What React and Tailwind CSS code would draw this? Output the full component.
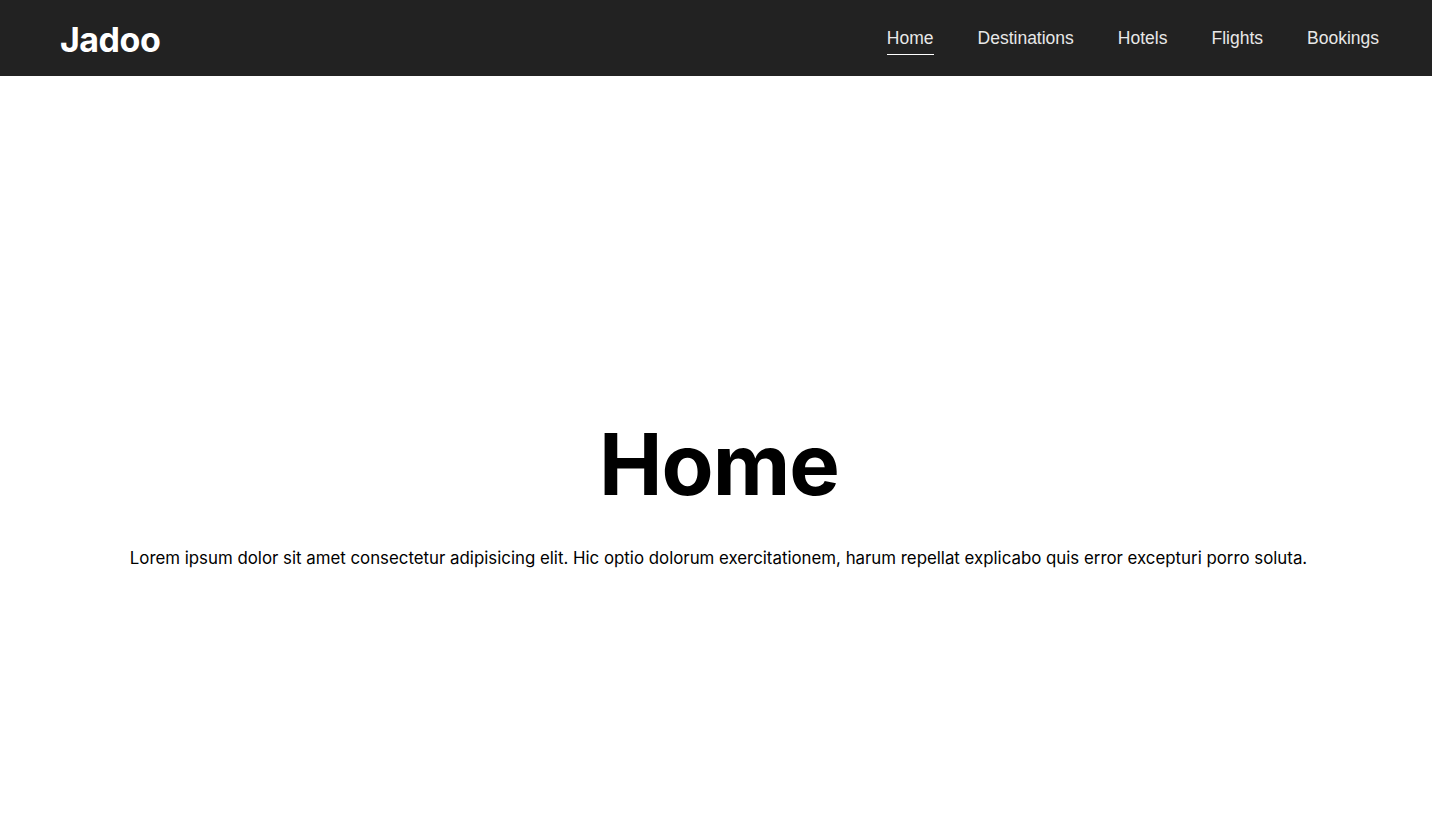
export default function App() {
  const links = ["Home", "Destinations", "Hotels", "Flights", "Bookings"];
  return (
    <div className="min-h-screen flex flex-col bg-white" style={{ fontFamily: "Inter, 'Liberation Sans', sans-serif" }}>
      <nav className="h-[76px] bg-[#222222] flex items-center justify-between pl-[60px] pr-[53px]">
        <div className="text-[34px] font-bold text-white tracking-[-0.5px] mt-[2px]">Jadoo</div>
        <ul className="flex items-center gap-[44px] mt-[1px]">
          {links.map((l, i) => (
            <li key={l}>
              <a
                href="#"
                className={`text-[17.5px] text-[#e8e8e8] pb-[6px] ${i === 0 ? "border-b border-white" : ""}`}
                style={{ fontFamily: "'Liberation Sans', Arial, sans-serif" }}
              >
                {l}
              </a>
            </li>
          ))}
        </ul>
      </nav>
      <main className="h-[758px] flex flex-col items-center justify-center text-black">
        <h1 className="text-[85px] font-bold leading-none tracking-[-1px] mt-[84px] pl-[6px]">Home</h1>
        <p className="text-[16.84px] mt-[39px] pl-[5px]">
          Lorem ipsum dolor sit amet consectetur adipisicing elit. Hic optio dolorum exercitationem, harum repellat explicabo quis error excepturi porro soluta.
        </p>
      </main>
    </div>
  );
}
